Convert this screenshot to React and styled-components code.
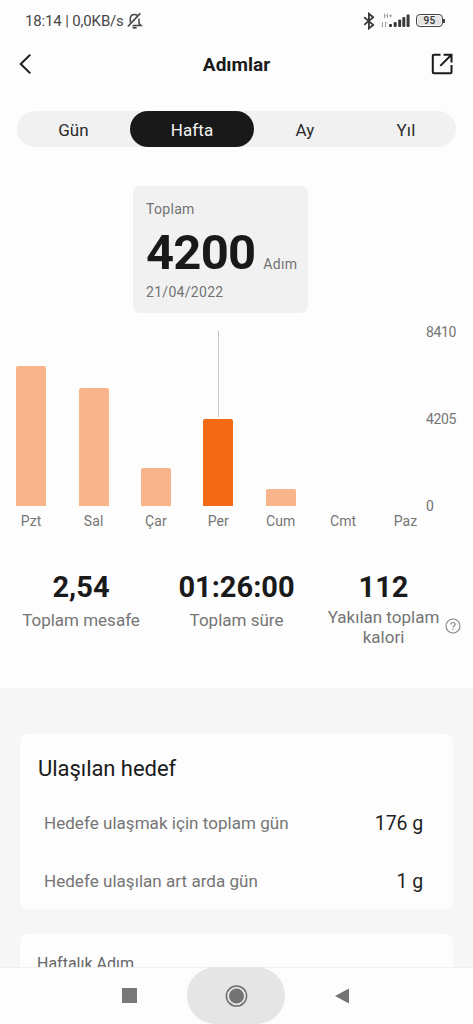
import React from "react";
import styled, { createGlobalStyle } from "styled-components";

const GlobalStyle = createGlobalStyle`
  *, *::before, *::after { box-sizing: border-box; }
  body { margin: 0; background: #fdfdfd; font-family: Roboto, "Liberation Sans", sans-serif; }
`;

const Screen = styled.div`
  width: 473px;
  height: 1024px;
  display: flex;
  flex-direction: column;
  overflow: hidden;
  background: #fdfdfd;
  color: #1a1a1a;
`;

const StatusBar = styled.div`
  flex: none;
  height: 40px;
  display: flex;
  align-items: center;
  justify-content: space-between;
  padding: 1px 30px 0 25px;
  color: #474747;
  font-size: 15px;
  line-height: 20px;
`;

const StatusGroup = styled.div`
  display: flex;
  align-items: center;
  gap: ${(p) => p.$gap}px;
`;

const StatusText = styled.span`
  padding-top: 1px;
  letter-spacing: -0.15px;
  white-space: nowrap;
`;

const Header = styled.header`
  flex: none;
  height: 48px;
  display: grid;
  grid-template-columns: 60px 1fr 60px;
  align-items: center;
  padding: 0 20px 0 17px;
`;

const IconButton = styled.button`
  display: flex;
  justify-content: ${(p) => (p.$end ? "flex-end" : "flex-start")};
  padding: 0;
  border: 0;
  background: none;
  color: #1a1a1a;
`;

const Title = styled.h1`
  margin: 0;
  padding: 2px 0 0 3px;
  text-align: center;
  font-size: 19px;
  line-height: 24px;
  font-weight: 700;
`;

const Tabs = styled.nav`
  flex: none;
  display: grid;
  grid-template-columns: 113px 124px 102px 100px;
  width: 439px;
  height: 36px;
  margin: 23px 0 0 17px;
  border-radius: 18px;
  background: #f1f1f1;
`;

const Tab = styled.button`
  border: 0;
  padding: 2px 0 0;
  border-radius: 18px;
  background: ${(p) => (p.$active ? "#191919" : "transparent")};
  color: ${(p) => (p.$active ? "#f4f4f4" : "#2a2a2a")};
  font: 400 17px/20px Roboto, "Liberation Sans", sans-serif;
  letter-spacing: 0.1px;
`;

const Summary = styled.section`
  flex: none;
  width: 175px;
  height: 127px;
  margin: 39px 0 0 133px;
  padding: 13px 0 0 13px;
  border-radius: 7px;
  background: #f1f1f1;
  color: #737373;
  font-size: 14px;
  line-height: 20px;
  letter-spacing: 0.3px;
`;

const SummaryValue = styled.div`
  display: flex;
  align-items: baseline;
  gap: 8px;
  height: 63px;
  padding-top: 2px;
  line-height: 64px;
`;

const BigNumber = styled.strong`
  color: #191919;
  font-size: 49px;
  font-weight: 700;
  letter-spacing: -0.8px;
`;

const Chart = styled.section`
  flex: none;
  display: grid;
  grid-template-columns: 410px 1fr;
  height: 219px;
  margin-top: 18px;
  color: #757575;
  font-size: 14px;
  line-height: 16px;
`;

const Days = styled.div`
  display: grid;
  grid-template-columns: repeat(7, 62.4px);
`;

const Day = styled.div`
  display: flex;
  flex-direction: column;
  align-items: center;
`;

const Plot = styled.div`
  flex: none;
  height: 175px;
  display: flex;
  flex-direction: column;
  align-items: center;
  justify-content: flex-end;
`;

const Guide = styled.div`
  flex: 1;
  width: 1px;
  margin-bottom: 2px;
  background: #c4c4c4;
`;

const Bar = styled.div`
  width: 30px;
  border-radius: 2px 2px 0 0;
  background: ${(p) => (p.$active ? "#f46a14" : "#f8b48b")};
`;

const DayLabel = styled.span`
  margin-top: 7px;
  letter-spacing: 0.1px;
`;

const Axis = styled.div`
  display: flex;
  flex-direction: column;
  justify-content: space-between;
  height: 190px;
  margin-top: -7px;
  padding-left: 16px;
  letter-spacing: -0.35px;
`;

const Stats = styled.section`
  flex: none;
  display: grid;
  grid-template-columns: 162px 149px 145px 1fr;
  height: 138px;
  padding-top: 20px;
`;

const Stat = styled.div`
  display: flex;
  flex-direction: column;
  align-items: center;
`;

const StatValue = styled.strong`
  font-size: 29px;
  line-height: 34px;
  font-weight: 700;
`;

const StatLabel = styled.span`
  margin-top: ${(p) => (p.$tall ? 3 : 6)}px;
  color: #757575;
  font-size: 17px;
  line-height: 20px;
  text-align: center;
  white-space: pre-line;
`;

const HelpSlot = styled.div`
  padding-top: 48px;
  margin-left: -11px;
`;

const Goals = styled.main`
  flex: 1;
  min-height: 0;
  overflow: hidden;
  padding: 46px 20px 0;
  background: #f6f6f6;
`;

const Card = styled.section`
  height: ${(p) => p.$height}px;
  margin-bottom: 25px;
  padding: 18px 30px 0 17px;
  border-radius: 8px;
  background: #fdfdfd;
`;

const CardTitle = styled.h2`
  margin: 0 0 11px;
  padding: 3px 0 0 1px;
  font-size: 22px;
  line-height: 28px;
  font-weight: 400;
  letter-spacing: -0.05px;
`;

const CardCaption = styled.div`
  padding-top: 1px;
  color: #666;
  font-size: 16px;
  line-height: 22px;
`;

const GoalRow = styled.div`
  display: flex;
  align-items: center;
  justify-content: space-between;
  height: 58px;
  padding-left: 7px;
  color: #757575;
  font-size: 17px;
  letter-spacing: 0.04px;
`;

const GoalValue = styled.span`
  color: #1f1f1f;
  font-size: 19.5px;
  letter-spacing: -0.1px;
`;

const NavBar = styled.footer`
  flex: none;
  height: 57px;
  display: grid;
  grid-template-columns: 187px 98px 1fr;
  align-items: center;
  border-top: 1px solid #f0f0f0;
  background: #fdfdfd;
`;

const NavButton = styled.button`
  display: flex;
  align-items: center;
  justify-content: ${(p) => p.$align || "center"};
  height: 57px;
  margin-top: -1px;
  padding: ${(p) => p.$pad || "0"};
  border: 0;
  border-radius: 29px;
  background: ${(p) => (p.$pressed ? "#e5e5e5" : "transparent")};
`;

const BellOffIcon = () => (
  <svg width="16" height="18" viewBox="0 0 16 18" fill="none" stroke="#474747" strokeWidth="1.5">
    <path d="M3.300 10.500V7C3.300 4.200 5 2.400 7.500 2.400c1.200 0 2.200.4 2.900 1.200M12 6.400v5.200l2 1.800H5.600" />
    <path d="M.9 14.500 13.300 1.300" strokeWidth="1.700" />
    <path d="M5.600 15.700h4" strokeWidth="1.900" />
  </svg>
);

const BluetoothIcon = () => (
  <svg width="12" height="18" viewBox="0 0 12 18" fill="none" stroke="#3a3a3a" strokeWidth="1.800">
    <path d="m1.200 5.200 9 7.700-4.300 3.500V1.700l4.300 3.500-9 7.700" />
  </svg>
);

const SignalIcon = () => (
  <svg width="29" height="18" viewBox="0 0 29 18">
    <g fill="none" stroke="#a3a3a3" strokeWidth="1">
      <path d="M3.500 1.500v4.500M6.500 1.500v4.500M3.500 3.800h3M8 3.800h3M9.500 2.300v3M1.500 10v5M.3 13.500l1.200 1.500M4.500 15v-5l1.500 1.500" />
    </g>
    <g fill="#3a3a3a">
      <rect x="8" y="12" width="3" height="3" rx="1" />
      <rect x="12.700" y="10" width="3" height="5" rx="1" />
      <rect x="17.200" y="7.500" width="3" height="7.500" rx="1" />
      <rect x="21.300" y="5" width="3" height="10" rx="1" />
      <rect x="25.600" y="2.500" width="3" height="12.500" rx="1" />
    </g>
  </svg>
);

const BatteryShell = styled.span`
  position: relative;
  width: 27px;
  height: 13px;
  border: 1.5px solid #444;
  border-radius: 4px;
  background: #e3e3e3;
  box-shadow: inset 0 0 0 1px #fdfdfd;
  color: #333;
  font-size: 10px;
  line-height: 11px;
  font-weight: 500;
  letter-spacing: 0.2px;
  text-align: center;
  &::after {
    content: "";
    position: absolute;
    right: -3px;
    top: 4px;
    width: 2px;
    height: 4px;
    background: #444;
  }
`;

const BackIcon = () => (
  <svg width="16" height="24" viewBox="0 0 16 24" fill="none" stroke="currentColor" strokeWidth="2">
    <path d="M13.300 2.600 3.700 12l9.600 9.400" />
  </svg>
);

const ShareIcon = () => (
  <svg width="22" height="22" viewBox="0 0 22 22" fill="none" stroke="currentColor" strokeWidth="2">
    <path d="M9.500 1.700H2.800a1 1 0 0 0-1 1v16.600a1 1 0 0 0 1 1h16.700a1 1 0 0 0 1-1V12" />
    <path d="M12.600 1.700h7.900v7.900M20.200 2 9.300 12.900" />
  </svg>
);

const HelpIcon = () => (
  <svg width="16" height="16" viewBox="0 0 16 16" fill="none" stroke="#858585" strokeWidth="1.100">
    <circle cx="8" cy="8" r="7" />
    <path d="M5.900 6.500c0-1.200.9-2 2.100-2s2.100.8 2.100 1.900c0 1.500-2 1.600-2 3.200M8.100 10.700v1.200" strokeWidth="1.200" />
  </svg>
);

const HomeIcon = () => (
  <svg width="24" height="24" viewBox="0 0 24 24">
    <circle cx="12.500" cy="12" r="10.100" fill="none" stroke="#6f6f6f" strokeWidth="1.500" />
    <circle cx="12.500" cy="12" r="7.500" fill="#737373" />
  </svg>
);

const days = [
  { name: "Pzt", height: 140 },
  { name: "Sal", height: 118 },
  { name: "Çar", height: 38 },
  { name: "Per", height: 87.5, active: true },
  { name: "Cum", height: 17 },
  { name: "Cmt", height: 0 },
  { name: "Paz", height: 0 },
];

const tabs = ["Gün", "Hafta", "Ay", "Yıl"];

export default function App() {
  return (
    <Screen>
      <GlobalStyle />
      <StatusBar>
        <StatusGroup $gap={3}>
          <StatusText>18:14 | 0,0KB/s</StatusText>
          <BellOffIcon />
        </StatusGroup>
        <StatusGroup $gap={6}>
          <BluetoothIcon />
          <SignalIcon />
          <BatteryShell>95</BatteryShell>
        </StatusGroup>
      </StatusBar>

      <Header>
        <IconButton aria-label="Geri"><BackIcon /></IconButton>
        <Title>Adımlar</Title>
        <IconButton $end aria-label="Paylaş"><ShareIcon /></IconButton>
      </Header>

      <Tabs>
        {tabs.map((t) => (
          <Tab key={t} $active={t === "Hafta"}>{t}</Tab>
        ))}
      </Tabs>

      <Summary>
        <div>Toplam</div>
        <SummaryValue>
          <BigNumber>4200</BigNumber>
          <span>Adım</span>
        </SummaryValue>
        <div>21/04/2022</div>
      </Summary>

      <Chart>
        <Days>
          {days.map((d) => (
            <Day key={d.name}>
              <Plot>
                {d.active && <Guide />}
                <Bar $active={d.active} style={{ height: d.height }} />
              </Plot>
              <DayLabel>{d.name}</DayLabel>
            </Day>
          ))}
        </Days>
        <Axis>
          <span>8410</span>
          <span>4205</span>
          <span>0</span>
        </Axis>
      </Chart>

      <Stats>
        <Stat>
          <StatValue>2,54</StatValue>
          <StatLabel>Toplam mesafe</StatLabel>
        </Stat>
        <Stat>
          <StatValue>01:26:00</StatValue>
          <StatLabel>Toplam süre</StatLabel>
        </Stat>
        <Stat>
          <StatValue>112</StatValue>
          <StatLabel $tall>{"Yakılan toplam\nkalori"}</StatLabel>
        </Stat>
        <HelpSlot><HelpIcon /></HelpSlot>
      </Stats>

      <Goals>
        <Card $height={175}>
          <CardTitle>Ulaşılan hedef</CardTitle>
          <GoalRow>
            <span>Hedefe ulaşmak için toplam gün</span>
            <GoalValue>176 g</GoalValue>
          </GoalRow>
          <GoalRow>
            <span>Hedefe ulaşılan art arda gün</span>
            <GoalValue>1 g</GoalValue>
          </GoalRow>
        </Card>
        <Card $height={120}>
          <CardCaption>Haftalık Adım</CardCaption>
        </Card>
      </Goals>

      <NavBar>
        <NavButton $align="flex-end" $pad="0 50px 0 0" aria-label="Son uygulamalar">
          <svg width="15" height="15"><rect width="15" height="15" rx="0.500" fill="#787878" /></svg>
        </NavButton>
        <NavButton $pressed aria-label="Ana ekran"><HomeIcon /></NavButton>
        <NavButton $align="flex-start" $pad="0 0 0 49px" aria-label="Geri dön">
          <svg width="16" height="16"><path d="M15 0.500v15L1 8z" fill="#737373" /></svg>
        </NavButton>
      </NavBar>
    </Screen>
  );
}
